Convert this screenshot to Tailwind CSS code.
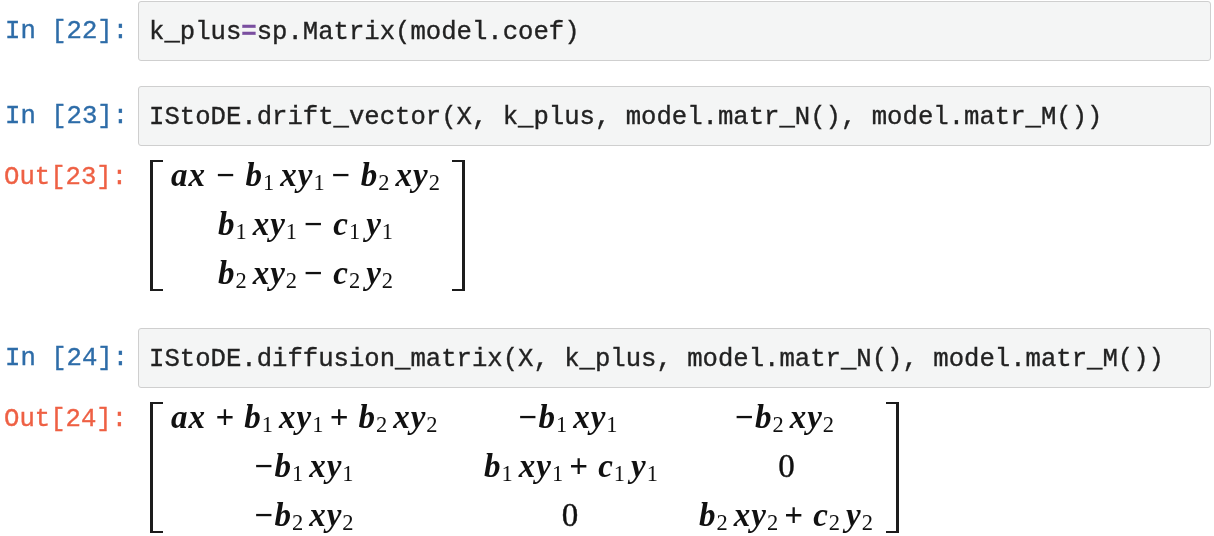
<!DOCTYPE html>
<html lang="en">
<head>
  <meta charset="UTF-8" />
  <title>Notebook cells</title>
  <script src="https://cdn.jsdelivr.net/npm/@tailwindcss/browser@4"></script>
</head>
<body class="bg-white overflow-hidden font-['Liberation_Mono',monospace] text-[25.63px] text-[#222] [-webkit-text-stroke:0.35px]">
  <div class="w-[1214px] h-[536px] pt-px overflow-hidden blur-[0.4px]">

    <!-- In 22 -->
    <div class="flex h-[60px]">
      <div class="w-[138px] shrink-0 pl-[5px] pt-[16px] leading-[30px] text-[#2d6ca8]">In [22]:</div>
      <div class="w-[1073px] border border-[#cfcfcf] rounded-[3px] bg-[#f4f5f5] pl-[10px] pt-[16px] leading-[30px]">k_plus<span class="text-[#7a4fa0] font-bold">=</span>sp.Matrix(model.coef)</div>
    </div>

    <!-- In 23 -->
    <div class="flex h-[60px] mt-[25px]">
      <div class="w-[138px] shrink-0 pl-[5px] pt-[16px] leading-[30px] text-[#2d6ca8]">In [23]:</div>
      <div class="w-[1073px] border border-[#cfcfcf] rounded-[3px] bg-[#f4f5f5] pl-[10px] pt-[16px] leading-[30px]">IStoDE.drift_vector(X, k_plus, model.matr_N(), model.matr_M())</div>
    </div>

    <!-- Out 23 -->
    <div class="flex h-[131px] mt-[14px]">
      <div class="w-[150px] shrink-0 pl-[4px] pt-[3px] leading-[30px] text-[#ee6044]">Out[23]:</div>
      <div class="w-[13px] h-[131px] border-l-[3px] border-y-[2px] border-[#1c1c1c]"></div>
      <div class="w-[289px] h-[131px] -mt-[3px] px-[8px] font-['Liberation_Serif',serif] italic font-bold text-[33px] tracking-[1px] [-webkit-text-stroke:0px] text-[#111] text-center grid grid-rows-[49px_49px_49px] leading-[36px] whitespace-nowrap [&_sub]:text-[68%] [&_sub]:not-italic [&_sub]:font-normal [&_sub]:-bottom-[0.18em] [&_sub]:mr-[5px]">
        <div>ax − b<sub>1</sub>xy<sub>1</sub>− b<sub>2</sub>xy<sub>2</sub></div>
        <div>b<sub>1</sub>xy<sub>1</sub>− c<sub>1</sub>y<sub>1</sub></div>
        <div>b<sub>2</sub>xy<sub>2</sub>− c<sub>2</sub>y<sub>2</sub></div>
      </div>
      <div class="w-[13px] h-[131px] border-r-[3px] border-y-[2px] border-[#1c1c1c]"></div>
    </div>

    <!-- In 24 -->
    <div class="flex h-[60px] mt-[37px]">
      <div class="w-[138px] shrink-0 pl-[5px] pt-[16px] leading-[30px] text-[#2d6ca8]">In [24]:</div>
      <div class="w-[1073px] border border-[#cfcfcf] rounded-[3px] bg-[#f4f5f5] pl-[10px] pt-[16px] leading-[30px]">IStoDE.diffusion_matrix(X, k_plus, model.matr_N(), model.matr_M())</div>
    </div>

    <!-- Out 24 -->
    <div class="flex h-[131px] mt-[14px]">
      <div class="w-[150px] shrink-0 pl-[4px] pt-[3px] leading-[30px] text-[#ee6044]">Out[24]:</div>
      <div class="w-[13px] h-[131px] border-l-[3px] border-y-[2px] border-[#1c1c1c]"></div>
      <div class="w-[723px] h-[131px] -mt-[3px] px-[8px] font-['Liberation_Serif',serif] italic font-bold text-[33px] tracking-[1px] [-webkit-text-stroke:0px] text-[#111] text-center grid grid-cols-[271px_173px_176px] gap-x-[42px] grid-rows-[49px_49px_49px] leading-[36px] whitespace-nowrap [&_sub]:text-[68%] [&_sub]:not-italic [&_sub]:font-normal [&_sub]:-bottom-[0.18em] [&_sub]:mr-[5px]">
        <div>ax + b<sub>1</sub>xy<sub>1</sub>+ b<sub>2</sub>xy<sub>2</sub></div>
        <div>−b<sub>1</sub>xy<sub>1</sub></div>
        <div>−b<sub>2</sub>xy<sub>2</sub></div>
        <div>−b<sub>1</sub>xy<sub>1</sub></div>
        <div>b<sub>1</sub>xy<sub>1</sub>+ c<sub>1</sub>y<sub>1</sub></div>
        <div class="not-italic font-normal [-webkit-text-stroke:0.4px]">0</div>
        <div>−b<sub>2</sub>xy<sub>2</sub></div>
        <div class="not-italic font-normal [-webkit-text-stroke:0.4px]">0</div>
        <div>b<sub>2</sub>xy<sub>2</sub>+ c<sub>2</sub>y<sub>2</sub></div>
      </div>
      <div class="w-[13px] h-[131px] border-r-[3px] border-y-[2px] border-[#1c1c1c]"></div>
    </div>

  </div>
</body>
</html>
